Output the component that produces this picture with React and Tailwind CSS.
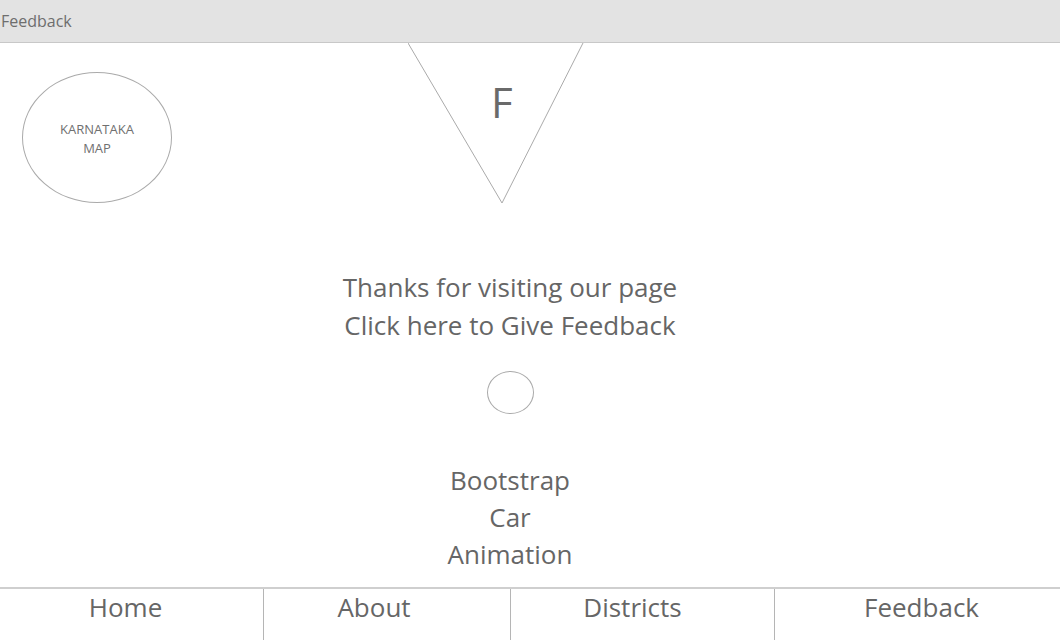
export default function App() {
  const navItems = [
    { label: "Home", cls: "w-[264px] pr-[12px]" },
    { label: "About", cls: "w-[247px] pr-[26px]" },
    { label: "Districts", cls: "w-[264px] pr-[20px]" },
    { label: "Feedback", cls: "flex-1 pl-[8px]" },
  ];

  return (
    <div
      className="h-screen w-full flex flex-col bg-white text-[#666] overflow-hidden"
      style={{ fontFamily: '"Open Sans", "Noto Sans", sans-serif' }}
    >
      {/* Top bar */}
      <div className="h-[43px] shrink-0 bg-[#e3e3e3] border-b border-[#c8c8c8] flex items-center pl-[1px] text-[16px] text-[#6e6e6e]">
        Feedback
      </div>

      {/* Main */}
      <div className="flex-1 flex flex-col">
        <div className="flex items-start">
          <div className="ml-[22px] mt-[29px] pt-[3px] w-[150px] h-[131px] rounded-[50%] border border-[#aaa] flex flex-col items-center justify-center text-[13px] leading-[19px] text-[#707070]">
            <span>KARNATAKA</span>
            <span>MAP</span>
          </div>
          <div className="relative ml-[236px] w-[176px] h-[160px]">
            <svg width="176" height="160" viewBox="0 0 176 160" className="block">
              <polyline points="0,0 94,160 175,0" fill="none" stroke="#aaa" strokeWidth="1" />
            </svg>
            <span className="absolute left-[83px] top-[38px] text-[42px] leading-none text-[#6a6a6a]">
              F
            </span>
          </div>
        </div>

        <div className="mt-[65px] pr-[40px] flex flex-col items-center text-[26px] leading-[38px]">
          <span>Thanks for visiting our page</span>
          <span>Click here to Give Feedback</span>
        </div>

        <div className="mt-[27px] pr-[40px] flex justify-center">
          <div className="w-[47px] h-[43px] rounded-[50%] border border-[#aaa]" />
        </div>

        <div className="mt-[48px] pr-[40px] flex flex-col items-center text-[26px] leading-[37px]">
          <span>Bootstrap</span>
          <span>Car</span>
          <span>Animation</span>
        </div>
      </div>

      {/* Bottom nav */}
      <div className="h-[53px] shrink-0 border-t-2 border-[#cfcfcf] flex">
        {navItems.map((item, i) => (
          <div
            key={item.label}
            className={`${item.cls} flex justify-center text-[26px] leading-[36px] ${
              i < navItems.length - 1 ? "border-r border-[#b5b5b5]" : ""
            }`}
          >
            {item.label}
          </div>
        ))}
      </div>
    </div>
  );
}
